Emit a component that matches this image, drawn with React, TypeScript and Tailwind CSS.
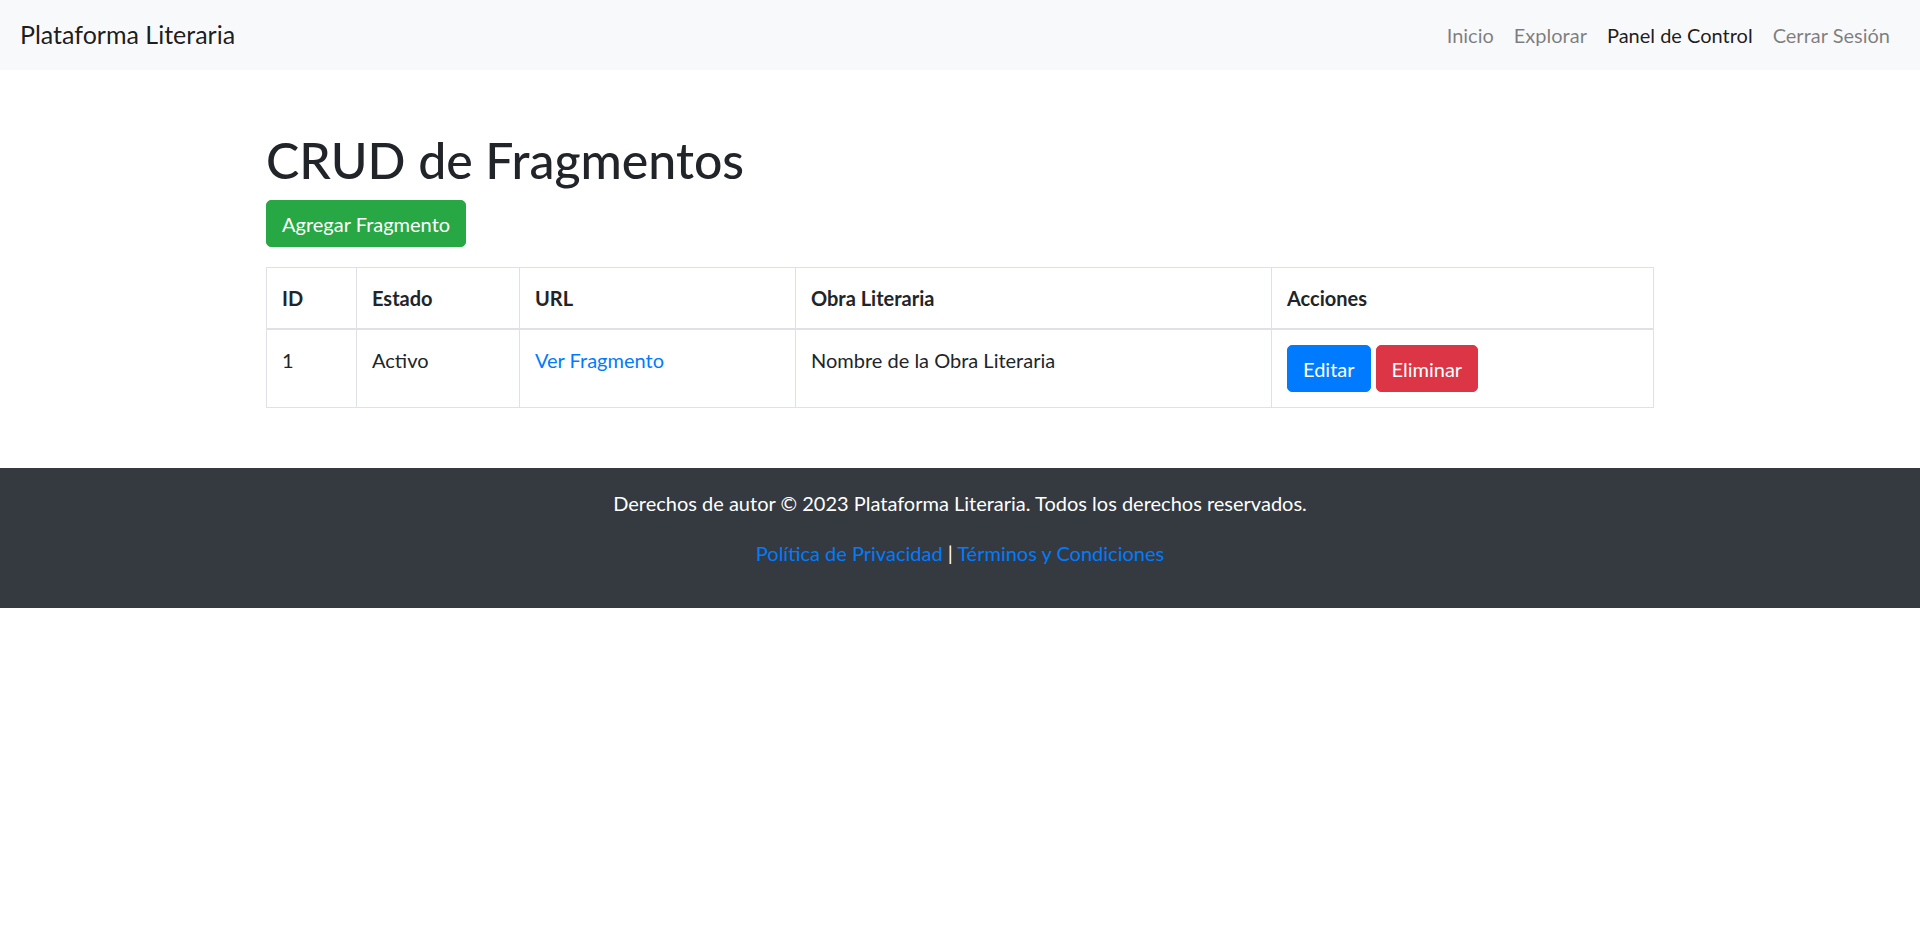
const font = { fontFamily: 'Lato, "Liberation Sans", Arial, sans-serif' };

const navItems = [
  { label: 'Inicio', active: false },
  { label: 'Explorar', active: false },
  { label: 'Panel de Control', active: true },
  { label: 'Cerrar Sesión', active: false },
];

export default function App() {
  return (
    <div className="min-h-[937px] bg-white text-[#212529] text-[20px] leading-[30px]" style={font}>
      {/* Navbar */}
      <nav className="flex items-center justify-between bg-[#f8f9fa] px-5 py-[10px]">
        <a className="py-[6.25px] text-[25px] leading-[37.5px] text-black/90 whitespace-nowrap">
          Plataforma Literaria
        </a>
        <ul className="flex">
          {navItems.map((item) => (
            <li key={item.label}>
              <a
                className={`block px-[10px] py-[10px] ${
                  item.active ? 'text-black/90' : 'text-black/50'
                }`}
              >
                {item.label}
              </a>
            </li>
          ))}
        </ul>
      </nav>

      {/* Content */}
      <main className="mx-auto mt-[60px] w-[1388px]">
        <h1 className="mb-[10px] text-[50px] font-medium leading-[60px]">CRUD de Fragmentos</h1>
        <button className="mb-5 rounded-[5px] border border-[#28a745] bg-[#28a745] px-[15px] py-[7.5px] text-white">
          Agregar Fragmento
        </button>

        <table className="w-full border-collapse border border-[#dee2e6] text-left">
          <thead>
            <tr>
              <th className="w-[90px] border border-b-2 border-[#dee2e6] p-[15px] align-bottom font-bold">ID</th>
              <th className="w-[163px] border border-b-2 border-[#dee2e6] p-[15px] align-bottom font-bold">Estado</th>
              <th className="w-[276px] border border-b-2 border-[#dee2e6] p-[15px] align-bottom font-bold">URL</th>
              <th className="w-[476px] border border-b-2 border-[#dee2e6] p-[15px] align-bottom font-bold">Obra Literaria</th>
              <th className="border border-b-2 border-[#dee2e6] p-[15px] align-bottom font-bold">Acciones</th>
            </tr>
          </thead>
          <tbody>
            <tr>
              <td className="border border-[#dee2e6] p-[15px] align-top">1</td>
              <td className="border border-[#dee2e6] p-[15px] align-top">Activo</td>
              <td className="border border-[#dee2e6] p-[15px] align-top">
                <a className="text-[#007bff]">Ver Fragmento</a>
              </td>
              <td className="border border-[#dee2e6] p-[15px] align-top">Nombre de la Obra Literaria</td>
              <td className="border border-[#dee2e6] p-[15px] align-top">
                <div className="flex gap-[5px]">
                  <button className="rounded-[5px] border border-[#007bff] bg-[#007bff] px-[15px] py-[7.5px] text-white">
                    Editar
                  </button>
                  <button className="rounded-[5px] border border-[#dc3545] bg-[#dc3545] px-[15px] py-[7.5px] text-white">
                    Eliminar
                  </button>
                </div>
              </td>
            </tr>
          </tbody>
        </table>
      </main>

      {/* Footer */}
      <footer className="mt-[60px] bg-[#343a40] py-5 text-center text-white">
        <p className="mb-5">Derechos de autor © 2023 Plataforma Literaria. Todos los derechos reservados.</p>
        <p className="mb-5">
          <a className="text-[#007bff]">Política de Privacidad</a> | <a className="text-[#007bff]">Términos y Condiciones</a>
        </p>
      </footer>
    </div>
  );
}
